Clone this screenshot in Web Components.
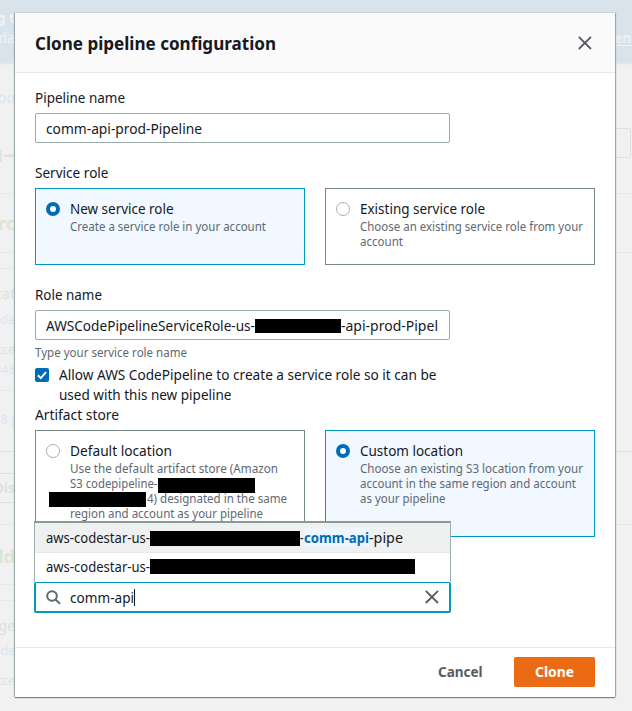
<!DOCTYPE html>
<html lang="en">
<head>
<meta charset="utf-8">
<title>Clone pipeline configuration</title>
<style>
  html, body { margin: 0; height: 711px; overflow: hidden; background: #f1f1f1; }
  body { position: relative; font-family: "Noto Sans", "Open Sans", sans-serif; font-size: 14px; line-height: 20px; color: #16191f; }
</style>
</head>
<body>
<page-backdrop></page-backdrop>
<clone-dialog></clone-dialog>
<script>
const define = (name, html, setup) => customElements.define(name, class extends HTMLElement {
  connectedCallback() {
    if (this.shadowRoot) return;
    const t = document.createElement('template');
    t.innerHTML = html;
    this.attachShadow({ mode: 'open' }).appendChild(t.content.cloneNode(true));
    if (setup) setup(this, this.shadowRoot);
  }
});

// A single line of text condensed to the width given by "w".
define('text-run', `<style>
  :host { display: inline-block; white-space: pre; vertical-align: baseline; }
  span { display: inline-block; transform-origin: 0 50%; }
</style><span><slot></slot></span>`, (el, root) => {
  const w = parseFloat(el.getAttribute('w'));
  const span = root.querySelector('span');
  const natural = span.getBoundingClientRect().width;
  el.style.width = w + 'px';
  if (natural) span.style.transform = `scaleX(${w / natural})`;
});

define('redacted-bar', `<style>
  :host { display: block; flex: none; background: #000; height: 14px; }
</style>`);

define('close-icon', `<style>:host { display: block; width: 14px; height: 14px; } svg { display: block; }</style>
<svg width="14" height="14" viewBox="0 0 14 14" fill="none" stroke="#545b64" stroke-width="1.8"><path d="M.8.8l12.2 12.2M13 .8L.8 13"/></svg>`);

define('form-label', `<style>:host { display: block; height: 20px; margin-bottom: 5px; }</style><slot></slot>`);

define('text-field', `<style>
  :host { display: flex; box-sizing: border-box; width: 415px; height: 30px; padding: 5px 10px 3px; line-height: 20px;
    border: 1px solid #9aabab; border-radius: 2px; background: #fff; }
</style><slot></slot>`);

define('radio-tile', `<style>
  :host { display: grid; grid-template-columns: 14px 1fr; column-gap: 10px; box-sizing: border-box; padding: 10px; border: 1px solid #748887; background: #fff; }
  :host([checked]) { border-color: #0099bf; background: #f1f8ff; }
  i { box-sizing: border-box; width: 14px; height: 14px; margin-top: 3px; border: 1px solid #a3b3b3; border-radius: 50%; background: #fff; }
  :host([checked]) i { border: 4px solid #006bb6; }
  .title { height: 20px; }
  .desc { font-size: 12px; line-height: 15px; color: #606972; display: flex; flex-direction: column; }
</style><i></i><div><div class="title"><slot name="title"></slot></div><div class="desc"><slot></slot></div></div>`);

define('check-row', `<style>
  :host { display: grid; grid-template-columns: 14px 1fr; column-gap: 10px; }
  svg { display: block; margin-top: 3px; }
  div { display: flex; flex-direction: column; }
</style><svg width="14" height="14"><rect width="14" height="14" rx="2" fill="#006bb6"/><path d="M2.9 7.3l2.9 2.8 5.2-6" fill="none" stroke="#fff" stroke-width="2"/></svg><div><slot></slot></div>`);

define('bucket-search', `<style>
  :host { display: block; position: relative; width: 417px; margin-left: -1px; }
  .box { box-sizing: border-box; height: 31px; display: flex; align-items: flex-start; border: solid #0099bf; border-width: 1px 2px 2px; border-radius: 2px; background: #fff; padding: 0 10px 0 10px; }
  .lens { margin: 7px 9px 0 0; flex: none; display: block; }
  .value { padding-top: 5px; height: 20px; }
  .caret { width: 1px; height: 17px; background: #16191f; margin: 6px 0 0; }
  close-icon { margin: 7px 0 0 auto; }
  .menu { position: absolute; left: 0; right: 0; bottom: 31px; box-sizing: border-box; height: 61px; background: #fff; border: 1px solid #9faeae; border-top: 2px solid #8a999c; border-bottom: 0; }
  .opt { display: flex; box-sizing: border-box; height: 29px; padding: 4px 0 0 11px; }
  .opt.on { height: 30px; background: #eff1f1; border-bottom: 1px solid #e5e9e9; padding-top: 5px; }
  .hit { background: #eef7ff; color: #006bb6; font-weight: 700; height: 18px; line-height: 20px; }
  .opt.on redacted-bar { margin-top: 3px; }
</style>
<div class="menu">
  <div class="opt on"><text-run w="104">aws-codestar-us-</text-run><redacted-bar style="width:150px;height:15px"></redacted-bar><text-run w="3.5">-</text-run><span class="hit"><text-run w="65">comm-api</text-run></span><text-run w="34">-pipe</text-run></div>
  <div class="opt"><text-run w="104">aws-codestar-us-</text-run><redacted-bar style="width:265px;height:15px;margin-top:2px"></redacted-bar></div>
</div>
<div class="box">
  <svg class="lens" width="15" height="15" fill="none" stroke="#5f6871" stroke-width="2"><circle cx="6" cy="6" r="4.8"/><path d="M9.5 9.5l4.6 4.4"/></svg>
  <text-run class="value" w="64">comm-api</text-run><div class="caret"></div><close-icon></close-icon>
</div>`);

define('action-button', `<style>
  :host { display: flex; justify-content: center; box-sizing: border-box; height: 30px; padding-top: 5px; font-weight: 700; color: #545b64; border-radius: 2px; }
  :host([primary]) { width: 81px; background: #eb6a14; color: #fff; }
</style><slot></slot>`);

define('clone-dialog', `<style>
  :host { position: absolute; left: 15px; top: 13px; width: 600px; height: 684px; display: flex; flex-direction: column; background: #fff;
    box-shadow: 0 1px 1px 0 #76868a, 1px 0 1px 0 #a3afb4, -1px 0 1px 0 #a3afb4; }
  header { display: flex; justify-content: space-between; box-sizing: border-box; height: 60px; padding: 18px 23px 0 20px; background: #fafafa; border-bottom: 1px solid #e6e9e9; font-size: 18px; line-height: 24px; font-weight: 700; }
  header close-icon { margin-top: 5px; }
  main { flex: 1; padding: 15px 20px 0; }
  .gap { margin-bottom: 20px; }
  .tiles { display: grid; grid-template-columns: 270px 270px; column-gap: 20px; }
  .hint { padding-top: 5px; box-sizing: border-box; height: 25px; font-size: 12px; line-height: 15px; color: #606972; }
  .line { display: flex; height: 15px; }
  footer { box-sizing: border-box; height: 50px; border-top: 1px solid #e6e9e9; padding: 9px 20px 0; display: flex; justify-content: flex-end; column-gap: 31.5px; }
</style>
<header><text-run w="241">Clone pipeline configuration</text-run><close-icon></close-icon></header>
<main>
  <form-label><text-run w="90">Pipeline name</text-run></form-label>
  <text-field class="gap"><text-run w="156">comm-api-prod-Pipeline</text-run></text-field>
  <form-label><text-run w="73.5">Service role</text-run></form-label>
  <div class="tiles gap" style="height:77px">
    <radio-tile checked><text-run slot="title" w="103.5">New service role</text-run><text-run w="196">Create a service role in your account</text-run></radio-tile>
    <radio-tile><text-run slot="title" w="125">Existing service role</text-run><text-run w="223">Choose an existing service role from your</text-run><text-run w="43">account</text-run></radio-tile>
  </div>
  <form-label><text-run w="67">Role name</text-run></form-label>
  <text-field><text-run w="209">AWSCodePipelineServiceRole-us-</text-run><redacted-bar style="width:86px;height:14px;margin-top:3px"></redacted-bar><text-run w="97">-api-prod-Pipel</text-run></text-field>
  <div class="hint"><text-run w="152">Type your service role name</text-run></div>
  <check-row><text-run w="377.5">Allow AWS CodePipeline to create a service role so it can be</text-run><text-run w="172.5">used with this new pipeline</text-run></check-row>
  <form-label><text-run w="84">Artifact store</text-run></form-label>
  <div class="tiles" style="height:107px;margin-bottom:45px">
    <radio-tile><text-run slot="title" w="102">Default location</text-run>
      <text-run w="208">Use the default artifact store (Amazon</text-run>
      <div class="line"><text-run w="87.5">S3 codepipeline-</text-run><redacted-bar style="width:97px;height:15px;margin-top:2px"></redacted-bar></div>
      <div class="line"><redacted-bar style="width:97px;height:15px;margin:1px 1px 0 -21px"></redacted-bar><text-run w="140">4) designated in the same</text-run></div>
      <text-run w="193">region and account as your pipeline</text-run>
    </radio-tile>
    <radio-tile checked><text-run slot="title" w="103">Custom location</text-run><text-run w="223">Choose an existing S3 location from your</text-run><text-run w="216">account in the same region and account</text-run><text-run w="85.5">as your pipeline</text-run></radio-tile>
  </div>
  <bucket-search></bucket-search>
</main>
<footer><action-button><text-run w="44.5">Cancel</text-run></action-button><action-button primary><text-run w="39">Clone</text-run></action-button></footer>`);

// The dimmed console page, of which only narrow edges stay visible round the dialog.
define('page-backdrop', `<style>
  :host { position: absolute; inset: 0; display: grid; grid-template: 711px / 15px 600px 17px; overflow: hidden;
    background: linear-gradient(#d9e3eb 62px, #e4e8eb 64px, #f1f1f1 65px); }
  .rail { display: grid; grid-template-columns: 15px; grid-template-rows: repeat(711, 1px); overflow: hidden; justify-items: end; }
  .rail.r { grid-column: 3; grid-template-columns: 17px; justify-items: start; }
  .rail > * { grid-column: 1; white-space: nowrap; height: 20px; line-height: 20px; }
  hr { margin: 0; border: 0; width: 100%; background: #e8e8e8; }
  .rail > hr { height: 1px; }
  .banner { color: #f0f2f4; font-weight: 700; }
  .blue { color: #dbe5ee; } .grey { color: #dedfe0; } .green { color: #dbe6d7; font-weight: 700; font-size: 18px; }
  .small { font-size: 12px; }
  .btn { box-sizing: border-box; width: 16px; border: 1px solid #dfe1e1; border-left: 0; border-radius: 0 2px 2px 0; }
  .rail > .btn { height: 30px; }
</style>
<div class="rail">
  <span class="banner" style="grid-row:9">g t</span>
  <span class="banner" style="grid-row:29;font-weight:400">da</span>
  <span class="blue" style="grid-row:89">Too</span>
  <span class="grey" style="grid-row:144;font-size:24px;font-weight:700">n–</span>
  <hr style="grid-row:194">
  <span class="green" style="grid-row:214">urc</span>
  <hr style="grid-row:253"><hr style="grid-row:269">
  <span class="grey" style="grid-row:285">cat</span>
  <span class="blue small" style="grid-row:311">ode</span>
  <span class="grey small" style="grid-row:341">cce</span>
  <span class="blue small" style="grid-row:361">448</span>
  <hr style="grid-row:391">
  <span class="blue small" style="grid-row:411">-8 [</span>
  <hr style="grid-row:452;background:#dfe1e1"><hr style="grid-row:474;background:#dfe1e1">
  <span class="grey" style="grid-row:479;font-weight:700">Dis</span>
  <hr style="grid-row:503;background:#dfe1e1"><hr style="grid-row:525">
  <span class="green" style="grid-row:547">ld</span>
  <hr style="grid-row:585"><hr style="grid-row:601">
  <span class="grey" style="grid-row:617">ge</span>
  <span class="blue small" style="grid-row:642">ode</span>
  <span class="grey small" style="grid-row:672">cce</span>
</div>
<div class="rail r">
  <span class="banner" style="grid-row:29;font-weight:600;text-decoration:underline;text-underline-offset:2px;margin-left:-1px">end</span>
  <div class="btn" style="grid-row:129"></div>
  <hr style="grid-row:194"><hr style="grid-row:253"><hr style="grid-row:452;background:#dfe1e1"><hr style="grid-row:525">
</div>`);
</script>
</body>
</html>
